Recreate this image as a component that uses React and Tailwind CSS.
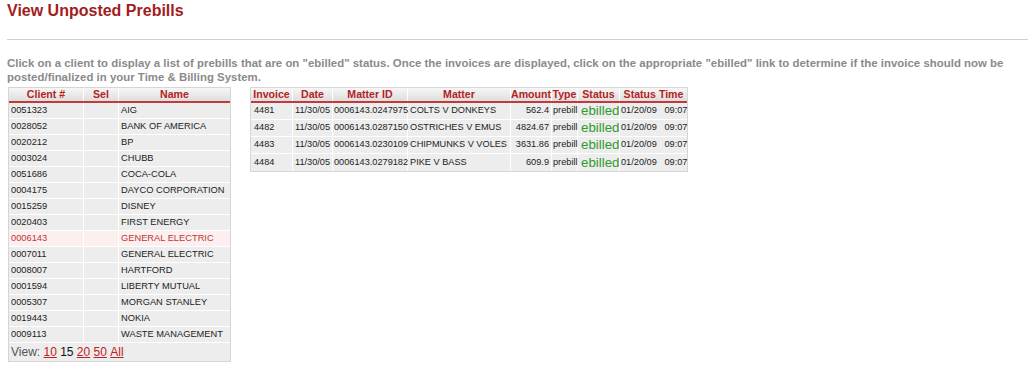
import React from "react";

const clients = [
  ["0051323", "AIG"],
  ["0028052", "BANK OF AMERICA"],
  ["0020212", "BP"],
  ["0003024", "CHUBB"],
  ["0051686", "COCA-COLA"],
  ["0004175", "DAYCO CORPORATION"],
  ["0015259", "DISNEY"],
  ["0020403", "FIRST ENERGY"],
  ["0006143", "GENERAL ELECTRIC", true],
  ["0007011", "GENERAL ELECTRIC"],
  ["0008007", "HARTFORD"],
  ["0001594", "LIBERTY MUTUAL"],
  ["0005307", "MORGAN STANLEY"],
  ["0019443", "NOKIA"],
  ["0009113", "WASTE MANAGEMENT"],
];

const invoices = [
  ["4481", "11/30/05", "0006143.0247975", "COLTS V DONKEYS", "562.4"],
  ["4482", "11/30/05", "0006143.0287150", "OSTRICHES V EMUS", "4824.67"],
  ["4483", "11/30/05", "0006143.0230109", "CHIPMUNKS V VOLES", "3631.86"],
  ["4484", "11/30/05", "0006143.0279182", "PIKE V BASS", "609.9"],
];

const font = { fontFamily: '"Liberation Sans", Arial, sans-serif' };

function Th({ children }) {
  return (
    <div className="flex h-[13px] items-center justify-center border-r border-white text-[10.6px] font-bold leading-none text-[#b42323] last:border-r-0 whitespace-nowrap">
      {children}
    </div>
  );
}

export default function App() {
  return (
    <div className="w-[1028px] h-[382px] bg-white pl-[7px] pt-px" style={font}>
      <h1 className="text-[16px] font-bold leading-[20px] text-[#a11d1d]">View Unposted Prebills</h1>
      <div className="mt-[18px] h-px bg-[#cfcfcf]" />
      <p className="mt-[16px] w-[1012px] text-[11.4px] font-bold leading-[14px] tracking-[0.02px] text-[#8a8a8a]">
        Click on a client to display a list of prebills that are on "ebilled" status. Once the invoices are displayed, click on the appropriate "ebilled" link to determine if the invoice should now be posted/finalized in your Time &amp; Billing System.
      </p>
      <div className="mt-[3px] flex items-start">
        {/* Clients table */}
        <div className="ml-px w-[223px] border border-[#d6d6d6] bg-[#ededed] text-[9.3px] text-[#222]">
          <div className="grid grid-cols-[75px_35px_111px] border-b-2 border-[#c23a3a] bg-linear-to-b from-[#f6f6f6] to-[#dedede]">
            <Th>Client #</Th>
            <Th>Sel</Th>
            <Th>Name</Th>
          </div>
          {clients.map(([id, name, sel], i) => (
            <div
              key={i}
              className={
                "grid h-[16px] grid-cols-[75px_35px_111px] border-b border-white " +
                (sel ? "bg-[#fcefef] text-[#c23434]" : "")
              }
            >
              <div className="flex items-center border-r border-white pl-[2px] leading-none">{id}</div>
              <div className="border-r border-white" />
              <div className="flex items-center pl-[2px] leading-none whitespace-nowrap">{name}</div>
            </div>
          ))}
          <div className="flex h-[18px] items-center pl-[2px] text-[12px] leading-none text-[#555]">
            <span>View:&nbsp;</span>
            <span className="text-[#c02020] underline">10</span>
            <span className="text-[#111]">&nbsp;15&nbsp;</span>
            <span className="text-[#c02020] underline">20</span>
            <span>&nbsp;</span>
            <span className="text-[#c02020] underline">50</span>
            <span>&nbsp;</span>
            <span className="text-[#c02020] underline">All</span>
          </div>
        </div>

        {/* Invoices table */}
        <div className="ml-[19px] w-[438px] border border-[#d6d6d6] bg-[#ededed] text-[9.2px] text-[#222]">
          <div className="grid grid-cols-[42px_40px_75px_103px_41px_26px_42px_67px] border-b-2 border-[#c23a3a] bg-linear-to-b from-[#f6f6f6] to-[#dedede]">
            <Th>Invoice</Th>
            <Th>Date</Th>
            <Th>Matter ID</Th>
            <Th>Matter</Th>
            <Th>Amount</Th>
            <Th>Type</Th>
            <Th>Status</Th>
            <Th>Status Time</Th>
          </div>
          {invoices.map(([inv, date, mid, matter, amt], i) => (
            <div
              key={i}
              className="grid h-[17px] grid-cols-[42px_40px_75px_103px_41px_26px_42px_67px] border-b border-white last:border-b-0"
            >
              <div className="flex items-center border-r border-white pl-[3px] leading-none">{inv}</div>
              <div className="flex items-center border-r border-white pl-[2px] leading-none">{date}</div>
              <div className="flex items-center border-r border-white pl-[1px] leading-none whitespace-nowrap">{mid}</div>
              <div className="flex items-center border-r border-white pl-[2px] leading-none whitespace-nowrap">{matter}</div>
              <div className="flex items-center justify-end border-r border-white pr-[2px] leading-none">{amt}</div>
              <div className="flex items-center border-r border-white pl-[1px] leading-none">prebill</div>
              <div className="flex items-center border-r border-white pl-[3px] text-[13.3px] leading-none text-[#2f9a2f]">ebilled</div>
              <div className="flex items-center pl-[1px] leading-none whitespace-nowrap">01/20/09&nbsp;&nbsp; 09:07</div>
            </div>
          ))}
        </div>
      </div>
    </div>
  );
}
